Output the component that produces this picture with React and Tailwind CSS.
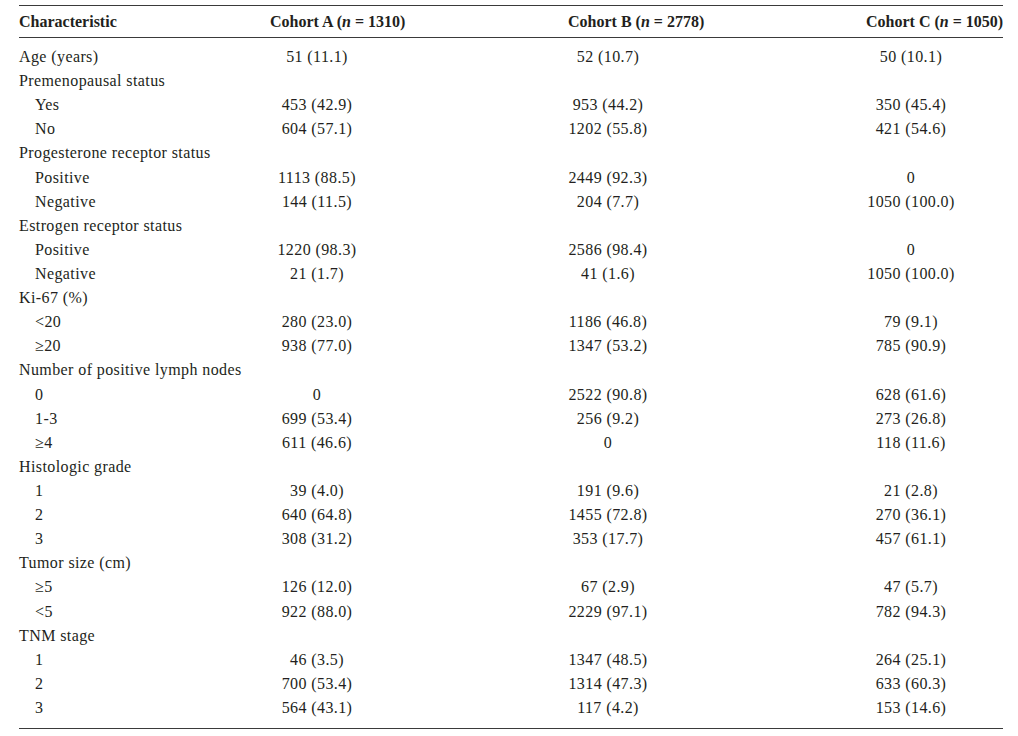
const rows = [
  { label: "Age (years)", a: "51 (11.1)", b: "52 (10.7)", c: "50 (10.1)" },
  { label: "Premenopausal status" },
  { label: "Yes", sub: true, a: "453 (42.9)", b: "953 (44.2)", c: "350 (45.4)" },
  { label: "No", sub: true, a: "604 (57.1)", b: "1202 (55.8)", c: "421 (54.6)" },
  { label: "Progesterone receptor status" },
  { label: "Positive", sub: true, a: "1113 (88.5)", b: "2449 (92.3)", c: "0" },
  { label: "Negative", sub: true, a: "144 (11.5)", b: "204 (7.7)", c: "1050 (100.0)" },
  { label: "Estrogen receptor status" },
  { label: "Positive", sub: true, a: "1220 (98.3)", b: "2586 (98.4)", c: "0" },
  { label: "Negative", sub: true, a: "21 (1.7)", b: "41 (1.6)", c: "1050 (100.0)" },
  { label: "Ki-67 (%)" },
  { label: "<20", sub: true, a: "280 (23.0)", b: "1186 (46.8)", c: "79 (9.1)" },
  { label: "≥20", sub: true, a: "938 (77.0)", b: "1347 (53.2)", c: "785 (90.9)" },
  { label: "Number of positive lymph nodes" },
  { label: "0", sub: true, a: "0", b: "2522 (90.8)", c: "628 (61.6)" },
  { label: "1-3", sub: true, a: "699 (53.4)", b: "256 (9.2)", c: "273 (26.8)" },
  { label: "≥4", sub: true, a: "611 (46.6)", b: "0", c: "118 (11.6)" },
  { label: "Histologic grade" },
  { label: "1", sub: true, a: "39 (4.0)", b: "191 (9.6)", c: "21 (2.8)" },
  { label: "2", sub: true, a: "640 (64.8)", b: "1455 (72.8)", c: "270 (36.1)" },
  { label: "3", sub: true, a: "308 (31.2)", b: "353 (17.7)", c: "457 (61.1)" },
  { label: "Tumor size (cm)" },
  { label: "≥5", sub: true, a: "126 (12.0)", b: "67 (2.9)", c: "47 (5.7)" },
  { label: "<5", sub: true, a: "922 (88.0)", b: "2229 (97.1)", c: "782 (94.3)" },
  { label: "TNM stage" },
  { label: "1", sub: true, a: "46 (3.5)", b: "1347 (48.5)", c: "264 (25.1)" },
  { label: "2", sub: true, a: "700 (53.4)", b: "1314 (47.3)", c: "633 (60.3)" },
  { label: "3", sub: true, a: "564 (43.1)", b: "117 (4.2)", c: "153 (14.6)" },
];

const cols = "grid grid-cols-[251px_298px_298px_137px]";

function Cohort({ name, n }) {
  return (
    <span className="whitespace-nowrap">
      Cohort {name} (<i>n</i> = {n})
    </span>
  );
}

export default function App() {
  return (
    <div className="min-h-screen bg-white pt-[5px] font-['Liberation_Serif',serif] text-[#231f20]">
      <div className="ml-[19px] w-[984px]">
        {/* header */}
        <div className={`${cols} h-[33px] items-center border-t border-b border-[#3a3a3a] text-[16px] font-bold`}>
          <div>Characteristic</div>
          <div><Cohort name="A" n="1310" /></div>
          <div><Cohort name="B" n="2778" /></div>
          <div><Cohort name="C" n="1050" /></div>
        </div>

        {/* body */}
        <div className="border-b border-[#3a3a3a] pt-[7px] pb-[8px] text-[16px] tracking-[0.4px]">
          {rows.map((r, i) => (
            <div key={i} className={`${cols} h-[24.11px] items-center leading-none`}>
              <div className={r.sub ? "pl-[16px]" : ""}>{r.label}</div>
              <div>
                <div className="w-[94px] text-center">{r.a}</div>
              </div>
              <div>
                <div className="w-[80px] text-center">{r.b}</div>
              </div>
              <div>
                <div className="w-[90px] text-center">{r.c}</div>
              </div>
            </div>
          ))}
        </div>
      </div>
    </div>
  );
}
